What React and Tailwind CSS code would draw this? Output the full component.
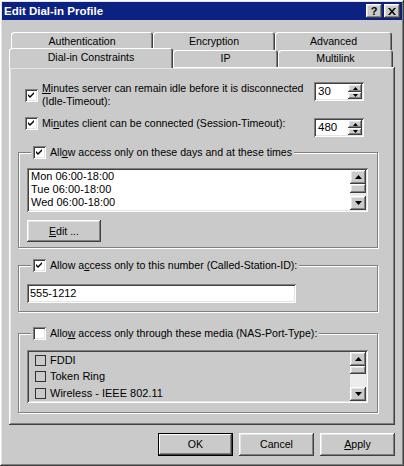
const raised =
  "shadow-[inset_-1px_-1px_#404040,inset_1px_1px_#fff,inset_-2px_-2px_#808080,inset_2px_2px_#e4e4e4]";
const sunken =
  "shadow-[inset_1px_1px_#808080,inset_-1px_-1px_#fff,inset_2px_2px_#404040,inset_-2px_-2px_#e4e4e4]";

function Check() {
  return (
    <svg width="7" height="7" viewBox="0 0 7 7">
      <polygon points="0,2 2,4 6,0 6,2 2,6 0,4" fill="#000" />
    </svg>
  );
}

function CheckBox({ checked }) {
  return (
    <span className={`flex h-[13px] w-[13px] shrink-0 items-center justify-center bg-white ${sunken}`}>
      {checked && <Check />}
    </span>
  );
}

function Arrow({ up, small }) {
  const w = small ? 5 : 7;
  const h = small ? 3 : 4;
  return (
    <svg width={w} height={h} viewBox={`0 0 ${w} ${h}`}>
      <polygon points={up ? `0,${h} ${w / 2},0 ${w},${h}` : `0,0 ${w},0 ${w / 2},${h}`} fill="#000" />
    </svg>
  );
}

function Spin({ value }) {
  return (
    <div className={`flex h-[19px] w-[50px] items-center bg-white pl-[4px] pr-[2px] ${sunken}`}>
      <span className="flex-1 text-[11.5px] leading-[13px]">{value}</span>
      <div className="flex flex-col">
        <span className={`flex h-[8px] w-[14px] items-center justify-center bg-[#cacaca] ${raised}`}>
          <Arrow up small />
        </span>
        <span className={`flex h-[7px] w-[14px] items-center justify-center bg-[#cacaca] ${raised}`}>
          <Arrow small />
        </span>
      </div>
    </div>
  );
}

function ScrollBar({ thumb, track }) {
  return (
    <div className="flex w-[16px] flex-col">
      <span className={`flex h-[14px] items-center justify-center bg-[#cacaca] ${raised}`}>
        <Arrow up />
      </span>
      <span className={`bg-[#cacaca] ${raised}`} style={{ height: thumb }} />
      <span className="flex-1 bg-[#ececec]" style={{ minHeight: track }} />
      <span className={`flex h-[14px] items-center justify-center bg-[#cacaca] ${raised}`}>
        <Arrow />
      </span>
    </div>
  );
}

function Tab({ label, w, selected, back }) {
  if (selected) {
    return (
      <div
        className={`h-[20px] ${w} rounded-t-[3px] bg-[#cacaca] pt-[3px] text-center shadow-[inset_1px_1px_#fff,inset_-1px_0_#404040,inset_-2px_0_#808080]`}
      >
        {label}
      </div>
    );
  }
  return (
    <div
      className={`${back ? "h-[18px] pt-[3px]" : "mb-[1px] h-[17px] pt-[2px]"} ${w} rounded-t-[3px] bg-[#cacaca] text-center shadow-[inset_1px_1px_#fff,inset_-1px_0_#404040,inset_-2px_0_#808080]`}
    >
      {label}
    </div>
  );
}

function Group({ checked, children, label, className }) {
  return (
    <fieldset
      className={`w-[360px] border border-[#808080] pl-[8px] shadow-[inset_1px_1px_#fff,1px_1px_#fff] ${className}`}
    >
      <legend className="ml-[4px] bg-[#cacaca] px-[2px]">
        <span className="flex items-center gap-[4px]">
          <CheckBox checked={checked} />
          <span>{label}</span>
        </span>
      </legend>
      {children}
    </fieldset>
  );
}

function Button({ children, def }) {
  return (
    <button
      className={`flex h-[23px] w-[75px] items-center justify-center bg-[#cacaca] ${
        def
          ? "shadow-[inset_0_0_0_1px_#000,inset_-2px_-2px_#404040,inset_2px_2px_#fff,inset_-3px_-3px_#808080]"
          : raised
      }`}
    >
      {children}
    </button>
  );
}

export default function App() {
  return (
    <div
      className={`flex h-[466px] w-[404px] flex-col bg-[#cacaca] p-[2px] text-[10.6px] leading-[13px] text-black ${raised}`}
      style={{ fontFamily: '"Liberation Sans", Arial, sans-serif' }}
    >
      {/* Title bar */}
      <div className="flex h-[18px] items-center justify-between bg-[#0c2283] pl-[2px] pr-[2px]">
        <span className="text-[11.5px] font-bold text-white">Edit Dial-in Profile</span>
        <div className="flex gap-[2px]">
          <span className={`flex h-[14px] w-[16px] items-center justify-center bg-[#cacaca] text-[11px] font-bold ${raised}`}>
            ?
          </span>
          <span className={`flex h-[14px] w-[16px] items-center justify-center bg-[#cacaca] ${raised}`}>
            <svg width="8" height="7" viewBox="0 0 8 7">
              <path d="M0 0h2l2 2.5L6 0h2L5 3.5 8 7H6L4 4.5 2 7H0l3-3.5z" fill="#000" />
            </svg>
          </span>
        </div>
      </div>

      {/* Tabs + panel */}
      <div className="px-[7px] pt-[12px]">
        <div className="ml-[2px] flex">
          <Tab back label="Authentication" w="w-[142px]" />
          <Tab back label="Encryption" w="w-[122px]" />
          <Tab back label="Advanced" w="w-[117px]" />
        </div>
        <div className="relative z-10 -mb-[1px] -mt-[2px] flex items-end">
          <Tab selected label="Dial-in Constraints" w="w-[164px]" />
          <Tab label="IP" w="w-[105px]" />
          <Tab label="Multilink" w="w-[115px]" />
        </div>

        <div className={`h-[358px] w-[386px] px-[9px] pt-[15px] ${raised}`}>
          <div className="flex items-start pl-[7px]">
            <div className="flex w-[289px] items-center gap-[4px]">
              <CheckBox checked />
              <span>
                <u>M</u>inutes server can remain idle before it is disconnected
                <br />
                (Idle-Timeout):
              </span>
            </div>
            <Spin value="30" />
          </div>
          <div className="mt-[9px] flex items-start pl-[7px]">
            <div className="flex w-[289px] items-center gap-[4px]">
              <CheckBox checked />
              <span>
                Mi<u>n</u>utes client can be connected (Session-Timeout):
              </span>
            </div>
            <div className="mt-[1px]">
              <Spin value="480" />
            </div>
          </div>

          <Group
            checked
            className="mt-[9px] pb-[5px]"
            label={
              <>
                All<u>o</u>w access only on these days and at these times
              </>
            }
          >
            <div className={`mt-[9px] flex h-[44px] w-[341px] bg-white p-[2px] text-[11px] ${sunken}`}>
              <div className="flex-1 pl-[2px]">
                <div>Mon 06:00-18:00</div>
                <div>Tue 06:00-18:00</div>
                <div>Wed 06:00-18:00</div>
              </div>
              <ScrollBar thumb="9px" track="3px" />
            </div>
            <button className={`mt-[8px] flex h-[22px] w-[74px] items-center justify-center bg-[#cacaca] ${raised}`}>
              <span>
                <u>E</u>dit ...
              </span>
            </button>
          </Group>

          <Group
            checked
            className="mt-[11px] pb-[8px]"
            label={
              <>
                Allow a<u>c</u>cess only to this number (Called-Station-ID):
              </>
            }
          >
            <div className={`mt-[12px] flex h-[19px] w-[269px] items-center bg-white pl-[3px] text-[11px] ${sunken}`}>
              555-1212
            </div>
          </Group>

          <Group
            className="mt-[15px] pb-[9px]"
            label={
              <>
                Allo<u>w</u> access only through these media (NAS-Port-Type):
              </>
            }
          >
            <div className={`mt-[10px] flex h-[53px] w-[341px] p-[2px] ${sunken}`}>
              <div className="flex-1 pl-[6px]">
                {["FDDI", "Token Ring", "Wireless - IEEE 802.11"].map((m) => (
                  <div key={m} className="flex h-[16.5px] items-center gap-[4px]">
                    <span className="h-[11px] w-[11px] border border-[#303030]" />
                    <span className="text-[11px]">{m}</span>
                  </div>
                ))}
              </div>
              <ScrollBar thumb="9px" track="13px" />
            </div>
          </Group>
        </div>
      </div>

      {/* Buttons */}
      <div className="mt-[8px] flex justify-end gap-[6px] pr-[7px]">
        <Button def>OK</Button>
        <Button>Cancel</Button>
        <Button>
          <span>
            <u>A</u>pply
          </span>
        </Button>
      </div>
    </div>
  );
}
